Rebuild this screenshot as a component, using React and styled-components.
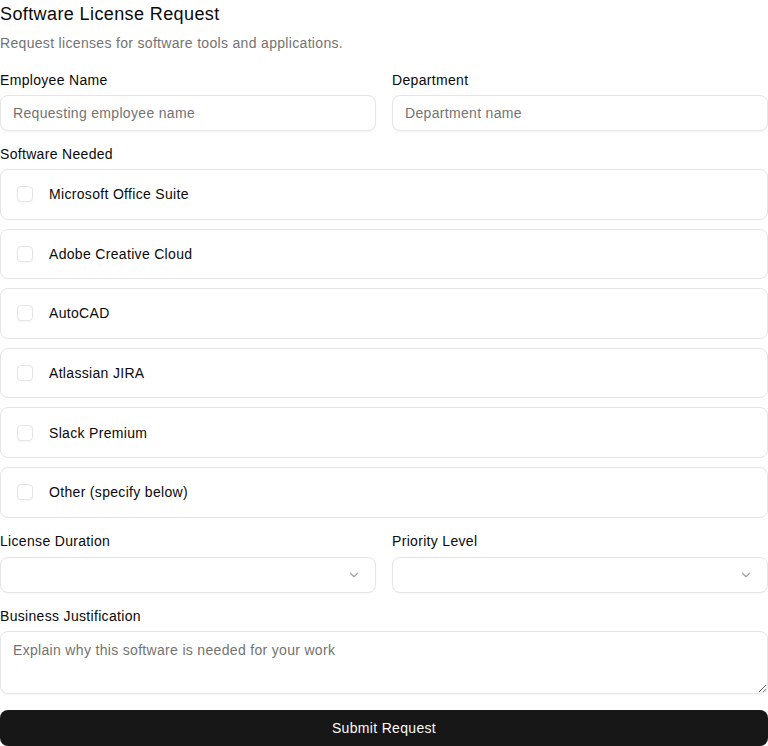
import React from "react";
import styled, { createGlobalStyle } from "styled-components";

const GlobalStyle = createGlobalStyle`
  * { box-sizing: border-box; }
  body {
    margin: 0;
    background: #ffffff;
    font-family: "Liberation Sans", Arial, sans-serif;
    color: #0a0a0a;
    letter-spacing: 0.02em;
  }
`;

const Page = styled.form`
  width: 768px;
  display: flex;
  flex-direction: column;
`;

const Title = styled.h1`
  margin: 0;
  font-size: 18px;
  line-height: 28px;
  font-weight: 500;
  letter-spacing: 0.022em;
`;

const Subtitle = styled.p`
  margin: 5px 0 0;
  font-size: 14px;
  line-height: 20px;
  color: #737373;
`;

const Fields = styled.div`
  margin-top: 18px;
  display: flex;
  flex-direction: column;
  gap: 14px;
`;

const Row = styled.div`
  display: grid;
  grid-template-columns: 1fr 1fr;
  gap: 16px;
`;

const Field = styled.div`
  display: flex;
  flex-direction: column;
  gap: ${(p) => p.$gap || 6}px;
`;

const Label = styled.label`
  font-size: 14px;
  line-height: 18px;
  color: #0a0a0a;
`;

const Input = styled.input`
  height: 36px;
  width: 100%;
  padding: 0 12px;
  border: 1px solid #e5e5e5;
  border-radius: 8px;
  font-family: inherit;
  font-size: 14px;
  letter-spacing: inherit;
  color: #0a0a0a;
  background: #fff;
  box-shadow: 0 1px 2px rgba(0, 0, 0, 0.04);
  outline: none;

  &::placeholder {
    color: #737373;
  }
`;

const OptionList = styled.div`
  display: flex;
  flex-direction: column;
  gap: 9px;
`;

const OptionCard = styled.label`
  height: 50.6px;
  display: flex;
  align-items: center;
  gap: 16px;
  padding: 0 16px;
  border: 1px solid #e5e5e5;
  border-radius: 8px;
  font-size: 14px;
  color: #0a0a0a;
`;

const Box = styled.span`
  width: 16px;
  height: 16px;
  flex: none;
  border: 1px solid #e5e5e5;
  border-radius: 4px;
  background: #fff;
  box-shadow: 0 1px 2px rgba(0, 0, 0, 0.04);
`;

const SelectBox = styled.button`
  height: 36px;
  width: 100%;
  display: flex;
  align-items: center;
  justify-content: flex-end;
  padding: 0 14px;
  border: 1px solid #e5e5e5;
  border-radius: 8px;
  background: #fff;
  box-shadow: 0 1px 2px rgba(0, 0, 0, 0.04);
  color: #a3a3a3;
`;

const TextArea = styled.textarea`
  height: 63px;
  width: 100%;
  padding: 8px 12px;
  border: 1px solid #e5e5e5;
  border-radius: 8px;
  font-family: inherit;
  font-size: 14px;
  letter-spacing: inherit;
  line-height: 20px;
  color: #0a0a0a;
  box-shadow: 0 1px 2px rgba(0, 0, 0, 0.04);
  outline: none;

  &::placeholder {
    color: #737373;
  }
`;

const Submit = styled.button`
  margin-top: 16px;
  height: 36px;
  width: 100%;
  border: none;
  border-radius: 8px;
  background: #171717;
  color: #fafafa;
  font-family: inherit;
  font-size: 14px;
  letter-spacing: inherit;
  font-weight: 500;
`;

const Chevron = () => (
  <svg width="14" height="14" viewBox="0 0 24 24" fill="none" stroke="currentColor" strokeWidth="2" strokeLinecap="round" strokeLinejoin="round">
    <path d="m6 9 6 6 6-6" />
  </svg>
);

const software = [
  "Microsoft Office Suite",
  "Adobe Creative Cloud",
  "AutoCAD",
  "Atlassian JIRA",
  "Slack Premium",
  "Other (specify below)",
];

export default function App() {
  return (
    <>
      <GlobalStyle />
      <Page onSubmit={(e) => e.preventDefault()}>
        <Title>Software License Request</Title>
        <Subtitle>Request licenses for software tools and applications.</Subtitle>
        <Fields>
          <Row>
            <Field>
              <Label>Employee Name</Label>
              <Input placeholder="Requesting employee name" />
            </Field>
            <Field>
              <Label>Department</Label>
              <Input placeholder="Department name" />
            </Field>
          </Row>
          <Field>
            <Label>Software Needed</Label>
            <OptionList>
              {software.map((name) => (
                <OptionCard key={name}>
                  <Box />
                  {name}
                </OptionCard>
              ))}
            </OptionList>
          </Field>
          <Row>
            <Field $gap={7}>
              <Label>License Duration</Label>
              <SelectBox type="button">
                <Chevron />
              </SelectBox>
            </Field>
            <Field $gap={7}>
              <Label>Priority Level</Label>
              <SelectBox type="button">
                <Chevron />
              </SelectBox>
            </Field>
          </Row>
          <Field>
            <Label>Business Justification</Label>
            <TextArea placeholder="Explain why this software is needed for your work" />
          </Field>
        </Fields>
        <Submit type="submit">Submit Request</Submit>
      </Page>
    </>
  );
}
